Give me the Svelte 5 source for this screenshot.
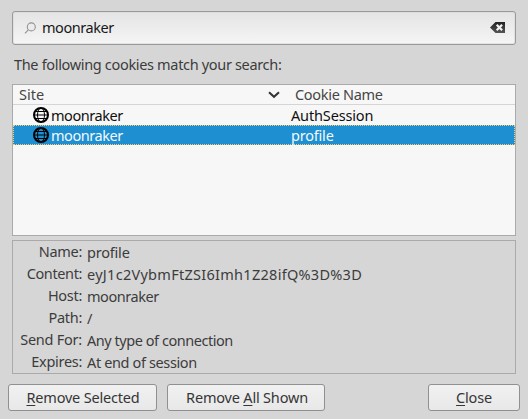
<script>
  let query = $state('moonraker');
  let selected = $state(1);

  const cookies = [
    { site: 'moonraker', name: 'AuthSession', tracking: -0.15 },
    { site: 'moonraker', name: 'profile', tracking: -0.2 }
  ];

  // tracking: letter-spacing in px for the label and the value
  const details = [
    { label: 'Name:', lt: -0.3, value: 'profile', vt: -0.2 },
    { label: 'Content:', lt: -0.38, value: 'eyJ1c2VybmFtZSI6Imh1Z28ifQ%3D%3D', vt: 0.28 },
    { label: 'Host:', lt: -0.3, value: 'moonraker', vt: -0.45 },
    { label: 'Path:', lt: -0.3, value: '/', vt: 0 },
    { label: 'Send For:', lt: -0.24, value: 'Any type of connection', vt: -0.46 },
    { label: 'Expires:', lt: -0.3, value: 'At end of session', vt: -0.37 }
  ];
</script>

<main class="dialog">
  <label class="search">
    <svg class="lens" width="13" height="13" viewBox="0 0 13 13">
      <circle cx="7.3" cy="4.9" r="4" />
      <path d="M4.3 7.9 L1 11.3" />
    </svg>
    <input bind:value={query} spellcheck="false" />
    <svg class="clear" width="16" height="12" viewBox="0 0 16 12">
      <defs>
        <linearGradient id="clear-fill" x1="0" y1="0" x2="0" y2="1">
          <stop offset="0" stop-color="#222" />
          <stop offset="1" stop-color="#555" />
        </linearGradient>
      </defs>
      <path d="M0 5.5 L5.5 0 H15 V11 H5.5 Z" fill="url(#clear-fill)" />
      <path d="M6.7 2.7 L12.1 8.3 M12.1 2.7 L6.7 8.3" stroke="#f4f4f4" stroke-width="2.2" />
    </svg>
  </label>

  <p class="summary">The following cookies match your search:</p>

  <section class="tree">
    <header>
      <span class="site-head">Site</span>
      <svg class="sort" width="12" height="8" viewBox="0 0 12 8"><path d="M1 1.2 L6 5.8 L11 1.2" /></svg>
      <span class="name-head">Cookie Name</span>
    </header>
    {#each cookies as cookie, i}
      <div class="row" class:selected={i === selected} role="presentation" onclick={() => (selected = i)}>
        <svg class="globe" width="16" height="16" viewBox="0 0 16 16">
          <circle cx="8" cy="8" r="7" stroke-width="2" />
          <ellipse cx="8" cy="8" rx="3.5" ry="7" />
          <path d="M2.5 4.5 H13.5 M1 8 H15 M2.5 11.5 H13.5" />
        </svg>
        <span class="site">{cookie.site}</span>
        <span style:letter-spacing="{cookie.tracking}px">{cookie.name}</span>
      </div>
    {/each}
  </section>

  <dl class="details">
    {#each details as d}
      <dt style:letter-spacing="{d.lt}px">{d.label}</dt>
      <dd style:letter-spacing="{d.vt}px">{d.value}</dd>
    {/each}
  </dl>

  <footer>
    <button class="remove"><u>R</u>emove Selected</button>
    <button class="remove-all">Remove <u>A</u>ll Shown</button>
    <button class="close"><u>C</u>lose</button>
  </footer>
</main>

<style>
  :global(body) {
    background: #d6d6d6;
    overflow: hidden;
  }
  .dialog {
    box-sizing: border-box;
    width: 528px;
    height: 419px;
    padding: 11px 8px 8px;
    display: flex;
    flex-direction: column;
    background: #d6d6d6;
    color: #3c3c3c;
    font: 14.5px/20px "Noto Sans", "Open Sans", sans-serif;
    white-space: nowrap;
  }
  .search {
    box-sizing: border-box;
    height: 34px;
    margin: 0 4px;
    padding: 0 9px 0 11px;
    display: flex;
    align-items: center;
    border: 1px solid #9a9a9a;
    border-radius: 3px;
    background: linear-gradient(#e4e4e4, #f5f5f5);
    box-shadow: inset 0 0 0 1px #d9d9d9aa;
  }
  .lens {
    fill: none;
    stroke: #929292;
    stroke-width: 1.1;
  }
  input {
    flex: 1;
    min-width: 0;
    height: 22px;
    margin: 0;
    padding: 0 0 2px 5px;
    border: 0;
    outline: 0;
    background: none;
    color: #181818;
    font: inherit;
    letter-spacing: -0.45px;
  }
  .summary {
    margin: 9px 6px 10px;
    letter-spacing: -0.33px;
  }
  .tree {
    box-sizing: border-box;
    height: 152px;
    margin: 0 4px;
    border: 1px solid #aaa;
    background: #f7f7f7;
  }
  header {
    box-sizing: border-box;
    height: 20px;
    padding-left: 6px;
    display: flex;
    align-items: center;
    border-bottom: 1px solid #d5d5d5;
    color: #464646;
    line-height: 18px;
  }
  .site-head,
  .name-head {
    padding-bottom: 2px;
  }
  .site-head {
    width: 249px;
    letter-spacing: 0;
  }
  .sort {
    fill: none;
    stroke: #333;
    stroke-width: 2;
  }
  .name-head {
    margin-left: 15px;
    letter-spacing: -0.3px;
  }
  .row {
    box-sizing: border-box;
    height: 20px;
    padding-left: 19px;
    display: flex;
    align-items: center;
    border: 1px dotted transparent;
    color: #101010;
  }
  .row.selected {
    border-color: #efcf65;
    background: #1e8fd0;
    color: #f4f9fc;
  }
  .globe {
    fill: none;
    stroke: #000;
    stroke-width: 1;
  }
  .site {
    width: 240px;
    padding-left: 2px;
    letter-spacing: -0.45px;
  }
  .details {
    box-sizing: border-box;
    height: 134px;
    margin: 4px 4px 10px;
    padding: 0 5px;
    display: grid;
    grid-template-columns: 64px 1fr;
    grid-auto-rows: 22px;
    column-gap: 5px;
    border: 1px solid #aaa;
  }
  dt {
    text-align: right;
    line-height: 20px;
  }
  dd {
    margin: 0;
    line-height: 22px;
  }
  footer {
    display: flex;
    gap: 10px;
  }
  button {
    box-sizing: border-box;
    height: 27px;
    margin: 0;
    padding: 0 0 2px;
    border: 1px solid #909090;
    border-radius: 3px;
    background: linear-gradient(#f1f1f1, #e8e8e8);
    color: #363636;
    font: inherit;
    letter-spacing: -0.19px;
  }
  u {
    text-decoration-thickness: 1px;
    text-underline-offset: 2px;
  }
  .remove {
    width: 149px;
    padding-left: 1px;
  }
  .remove-all {
    width: 158px;
    padding-left: 2px;
  }
  .close {
    width: 92px;
    margin-left: auto;
  }
</style>
